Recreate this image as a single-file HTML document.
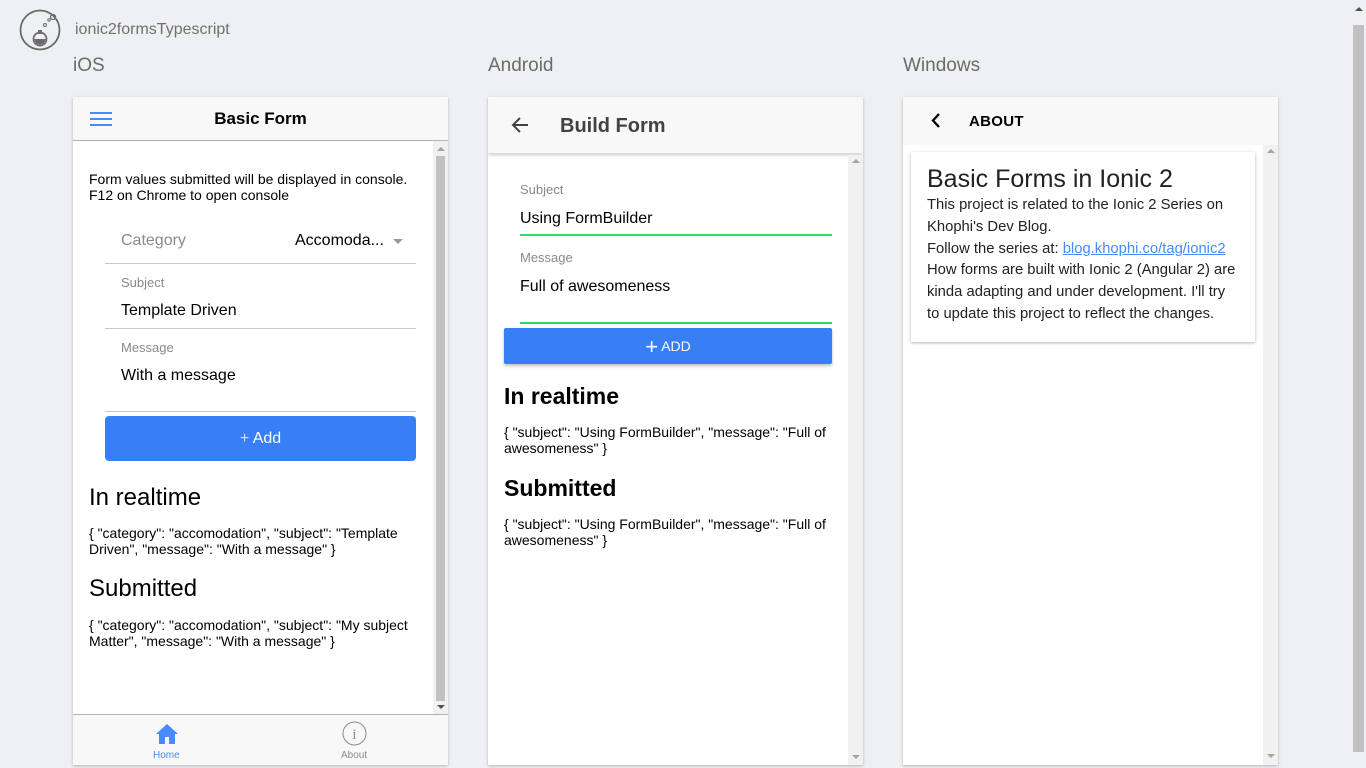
<!DOCTYPE html>
<html><head><meta charset="utf-8"><style>
*{box-sizing:border-box;margin:0;padding:0}
body{width:1366px;height:768px;background:#eff0f4;font-family:"Liberation Sans",sans-serif;position:relative;overflow:hidden;color:#000}
.a{position:absolute}
.panel{position:absolute;top:97px;width:375px;height:668px;background:#fff;box-shadow:0 1px 3px rgba(0,0,0,.25);overflow:hidden}
.sb{position:absolute;right:0;width:15px;background:#f1f1f1}
.thumb{position:absolute;left:3px;width:9px;background:#c1c1c1}
.up{position:absolute;left:4px;width:0;height:0;border-left:4px solid transparent;border-right:4px solid transparent;border-bottom:4px solid #a3a3a3}
.dn{position:absolute;left:4px;width:0;height:0;border-left:4px solid transparent;border-right:4px solid transparent;border-top:4px solid #505050}
.lbl{color:#8a8a8a;font-size:13px}
.val{font-size:16px}
.hr{position:absolute;height:1px;background:#c8c7cc}
</style></head><body>
<svg class="a" style="left:19px;top:9px" width="42" height="42" viewBox="0 0 42 42">
<circle cx="21" cy="21" r="19.5" fill="none" stroke="#6b6b6b" stroke-width="1.8"/>
<circle cx="21" cy="30" r="6.5" fill="none" stroke="#6b6b6b" stroke-width="1.8"/>
<path d="M15.5 30 a5.5 5.5 0 0 0 11 0z" fill="#6b6b6b"/>
<rect x="19" y="21" width="4" height="4" fill="#6b6b6b"/>
<circle cx="26" cy="16" r="1.5" fill="none" stroke="#6b6b6b"/>
<circle cx="30" cy="11" r="1.2" fill="none" stroke="#6b6b6b"/>
<circle cx="34" cy="8" r="2.5" fill="none" stroke="#6b6b6b" stroke-width="1.3"/>
</svg>
<div class="a" style="left:75px;top:21px;font-size:16px;color:#707070">ionic2formsTypescript</div>
<div class="a" style="left:73px;top:55px;font-size:19px;color:#6b6b6b">iOS</div>
<div class="a" style="left:488px;top:55px;font-size:19px;color:#6b6b6b">Android</div>
<div class="a" style="left:903px;top:55px;font-size:19px;color:#6b6b6b">Windows</div>
<div class="a" style="left:1355px;top:7px;width:0;height:0;border-left:4px solid transparent;border-right:4px solid transparent;border-bottom:4px solid #505050"></div>
<div class="a" style="left:1353px;top:25px;width:11px;height:727px;background:#c1c1c1"></div>

<!-- iOS -->
<div class="panel" style="left:73px">
 <div class="a" style="left:0;top:0;width:375px;height:44px;background:#f8f8f8;border-bottom:1px solid #b2b2b2"></div>
 <div class="a" style="left:17px;top:15px;width:22px;height:2px;background:#488aff;box-shadow:0 6px 0 #488aff,0 12px 0 #488aff"></div>
 <div class="a" style="left:0;top:12px;width:375px;text-align:center;font-size:17px;font-weight:bold">Basic Form</div>
 <div class="sb" style="top:44px;height:574px"><div class="up" style="top:6px"></div><div class="thumb" style="top:15px;height:545px"></div><div class="dn" style="top:564px"></div></div>
 <div class="a" style="left:16px;top:74px;font-size:14px;line-height:16px">Form values submitted will be displayed in console.<br>F12 on Chrome to open console</div>
 <div class="a lbl" style="left:48px;top:135px;font-size:16px">Category</div>
 <div class="a val" style="left:222px;top:135px">Accomoda...</div>
 <div class="a" style="left:320px;top:142px;border-left:5px solid transparent;border-right:5px solid transparent;border-top:5px solid #999"></div>
 <div class="hr" style="left:32px;top:166px;width:311px"></div>
 <div class="a lbl" style="left:48px;top:178px">Subject</div>
 <div class="a val" style="left:48px;top:205px">Template Driven</div>
 <div class="hr" style="left:32px;top:231px;width:311px"></div>
 <div class="a lbl" style="left:48px;top:243px">Message</div>
 <div class="a val" style="left:48px;top:270px">With a message</div>
 <div class="hr" style="left:32px;top:314px;width:311px"></div>
 <div class="a" style="left:32px;top:319px;width:311px;height:45px;background:#387ef5;border-radius:4px;color:#fff;font-size:16px;text-align:center;line-height:45px"><span style="font-weight:300;color:#cfe0ff">+</span> Add</div>
 <div class="a" style="left:16px;top:387px;font-size:24px">In realtime</div>
 <div class="a" style="left:16px;top:428px;font-size:14px;line-height:16px">{ "category": "accomodation", "subject": "Template<br>Driven", "message": "With a message" }</div>
 <div class="a" style="left:16px;top:478px;font-size:24px">Submitted</div>
 <div class="a" style="left:16px;top:520px;font-size:14px;line-height:16px">{ "category": "accomodation", "subject": "My subject<br>Matter", "message": "With a message" }</div>
 <div class="a" style="left:0;top:617px;width:375px;height:51px;background:#f8f8f8;border-top:1px solid #b2b2b2"></div>
 <svg class="a" style="left:82px;top:626px" width="24" height="22" viewBox="0 0 24 22"><path d="M12 1 L1 11 L4 11 L4 21 L10 21 L10 14 L14 14 L14 21 L20 21 L20 11 L23 11 Z" fill="#488aff"/></svg>
 <div class="a" style="left:80px;top:653px;font-size:10px;color:#488aff">Home</div>
 <svg class="a" style="left:269px;top:624px" width="25" height="25" viewBox="0 0 25 25"><circle cx="12.5" cy="12.5" r="11.5" fill="none" stroke="#8c8c8c"/><text x="12.5" y="18" text-anchor="middle" font-family="Liberation Serif" font-size="15" fill="#8c8c8c">i</text></svg>
 <div class="a" style="left:268px;top:653px;font-size:10px;color:#8c8c8c">About</div>
</div>

<!-- Android -->
<div class="panel" style="left:488px">
 <div class="a" style="left:0;top:0;width:375px;height:56px;background:#f8f8f8;box-shadow:0 2px 4px rgba(0,0,0,.2)"></div>
 <svg class="a" style="left:23px;top:19px" width="18" height="18" viewBox="0 0 18 18"><path d="M17 9H2M9 2L2 9l7 7" fill="none" stroke="#424242" stroke-width="2"/></svg>
 <div class="a" style="left:72px;top:18px;font-size:20px;font-weight:bold;color:#424242">Build Form</div>
 <div class="sb" style="top:58px;height:610px"><div class="up" style="top:4px"></div><div class="dn" style="top:600px;border-top-color:#a3a3a3"></div></div>
 <div class="a lbl" style="left:32px;top:85px">Subject</div>
 <div class="a val" style="left:32px;top:113px">Using FormBuilder</div>
 <div class="a" style="left:32px;top:137px;width:312px;height:2px;background:#32db64"></div>
 <div class="a lbl" style="left:32px;top:153px">Message</div>
 <div class="a val" style="left:32px;top:181px">Full of awesomeness</div>
 <div class="a" style="left:32px;top:225px;width:312px;height:2px;background:#32db64"></div>
 <div class="a" style="left:16px;top:231px;width:328px;height:36px;background:#387ef5;border-radius:2px;box-shadow:0 2px 3px rgba(0,0,0,.25);color:#fff;font-size:14px;text-align:center;line-height:36px"><span style="font-size:22px;font-weight:300;vertical-align:-3px">+</span> ADD</div>
 <div class="a" style="left:16px;top:286px;font-size:23px;font-weight:bold">In realtime</div>
 <div class="a" style="left:16px;top:327px;font-size:14px;line-height:16px">{ "subject": "Using FormBuilder", "message": "Full of<br>awesomeness" }</div>
 <div class="a" style="left:16px;top:378px;font-size:23px;font-weight:bold">Submitted</div>
 <div class="a" style="left:16px;top:419px;font-size:14px;line-height:16px">{ "subject": "Using FormBuilder", "message": "Full of<br>awesomeness" }</div>
</div>

<!-- Windows -->
<div class="panel" style="left:903px">
 <div class="a" style="left:0;top:0;width:375px;height:48px;background:#f8f8f8"></div>
 <svg class="a" style="left:27px;top:16px" width="12" height="15" viewBox="0 0 12 15"><path d="M9 1L3 7.5 9 14" fill="none" stroke="#000" stroke-width="2.3"/></svg>
 <div class="a" style="left:66px;top:16px;font-size:15px;font-weight:bold;letter-spacing:.3px">ABOUT</div>
 <div class="sb" style="top:48px;height:620px"><div class="up" style="top:4px"></div><div class="dn" style="top:609px;border-top-color:#a3a3a3"></div></div>
 <div class="a" style="left:8px;top:55px;width:344px;height:190px;background:#fff;box-shadow:0 1px 3px rgba(0,0,0,.3)"></div>
 <div class="a" style="left:24px;top:68px;font-size:25px;color:#222">Basic Forms in Ionic 2</div>
 <div class="a" style="left:24px;top:98px;font-size:14.8px;line-height:21.8px;color:#222;white-space:nowrap">This project is related to the Ionic 2 Series on<br>Khophi's Dev Blog.<br>Follow the series at: <span style="color:#488aff;text-decoration:underline">blog.khophi.co/tag/ionic2</span><br>How forms are built with Ionic 2 (Angular 2) are<br>kinda adapting and under development. I'll try<br>to update this project to reflect the changes.</div>
</div>
</body></html>
